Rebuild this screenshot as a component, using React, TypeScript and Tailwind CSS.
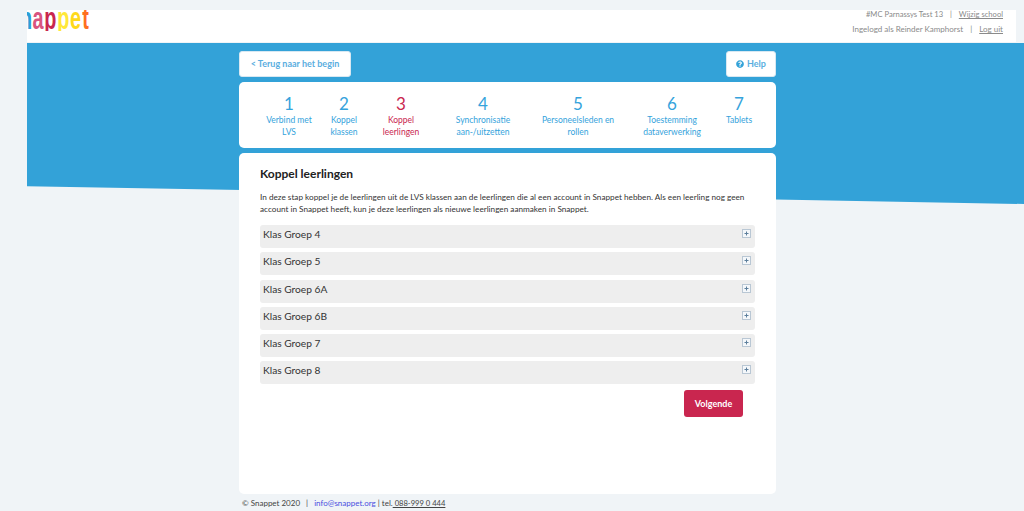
import { FaQuestionCircle } from "react-icons/fa";

const steps = [
  { n: "1", w: "w-[58px]", label: ["Verbind met", "LVS"] },
  { n: "2", w: "w-[52px]", label: ["Koppel", "klassen"] },
  { n: "3", w: "w-[62px]", label: ["Koppel", "leerlingen"], active: true },
  { n: "4", w: "w-[102px]", label: ["Synchronisatie", "aan-/uitzetten"] },
  { n: "5", w: "w-[88px]", label: ["Personeelsleden en", "rollen"] },
  { n: "6", w: "w-[100px]", label: ["Toestemming", "dataverwerking"] },
  { n: "7", w: "w-[34px]", label: ["Tablets"] },
];

const groups = ["Klas Groep 4", "Klas Groep 5", "Klas Groep 6A", "Klas Groep 6B", "Klas Groep 7", "Klas Groep 8"];

const logo = [
  ["n", "w-[12px] text-[#2a9fd8]"],
  ["a", "w-[12px] text-[#d9557f]"],
  ["p", "w-[12.5px] text-[#c9264f]"],
  ["p", "w-[12.5px] text-[#ffe83a]"],
  ["e", "w-[13px] text-[#ffd91a]"],
  ["t", "w-[7px] text-[#ff6f1f]"],
];

function PlusBox() {
  return (
    <svg width="9" height="9" viewBox="0 0 9 9" className="shrink-0">
      <rect x="0.5" y="0.5" width="8" height="8" fill="#f4f7fa" stroke="#b9c7d4" />
      <path d="M4.5 2.5v4M2.5 4.5h4" stroke="#5d7f9c" strokeWidth="1" />
    </svg>
  );
}

export default function App() {
  return (
    <div className="relative h-[511px] w-[1024px] overflow-hidden bg-[#f0f4f7] font-['Lato',sans-serif] text-[#333]">
      <div className="absolute left-[27px] right-0 top-[43px] h-[161px] bg-[#33a2d8] [clip-path:polygon(0_0,100%_0,100%_100%,0_89%)]" />
      <div className="relative">
        <header className="ml-[27px] mr-[8px] mt-[10px] flex h-[32px] justify-between bg-white">
          <div className="h-[21px] w-[64px] overflow-hidden">
            <div className="-ml-[7px] -mt-[11px] flex font-['Liberation_Sans',sans-serif] text-[32px] font-bold leading-[38px]">
              {logo.map(([c, k], i) => (
                <span key={i} className={`${k} flex shrink-0 scale-x-[0.62] justify-center`}>{c}</span>
              ))}
            </div>
          </div>
          <div className="pr-[13px] text-right text-[8px] leading-[15px] text-[#8a8a8a]">
            <div className="-mt-[3px] text-[7.6px]">
              #MC Parnassys Test 13 <span className="mx-[5px]">|</span> <span className="underline">Wijzig school</span>
            </div>
            <div>
              Ingelogd als Reinder Kamphorst <span className="mx-[5px]">|</span> <span className="underline">Log uit</span>
            </div>
          </div>
        </header>

        <main className="ml-[239px] w-[537px]">
          <div className="mt-[9px] flex h-[26px] justify-between text-[9px] font-bold text-[#5aaee0]">
            <button className="h-[26px] w-[112px] rounded-[3px] border border-[#d8e8f2] bg-white">&lt; Terug naar het begin</button>
            <button className="flex h-[26px] w-[50px] items-center justify-center gap-[3px] rounded-[3px] border border-[#d8e8f2] bg-white">
              <FaQuestionCircle className="h-[8px] w-[8px] text-[#33a2d8]" />
              Help
            </button>
          </div>

          <nav className="mt-[5px] flex h-[66px] rounded-[5px] bg-white pl-[21px] pt-[12px] text-center text-[#35a3dc]">
            {steps.map((s) => (
              <div key={s.n} className={`${s.w} shrink-0 ${s.active ? "text-[#c9264f]" : ""}`}>
                <div className="text-[17px] leading-[20px]">{s.n}</div>
                <div className="whitespace-nowrap text-[8.5px] leading-[12px]">
                  {s.label.map((l) => (
                    <div key={l} className="flex justify-center">{l}</div>
                  ))}
                </div>
              </div>
            ))}
          </nav>

          <section className="mt-[5px] h-[341px] rounded-[5px] bg-white px-[21px] pt-[13px]">
            <h1 className="text-[12px] font-bold leading-[15px] text-[#222]">Koppel leerlingen</h1>
            <p className="mt-[10px] text-[8.2px] leading-[12px] text-[#333]">
              In deze stap koppel je de leerlingen uit de LVS klassen aan de leerlingen die al een account in Snappet hebben. Als een leerling nog geen account in Snappet heeft, kun je deze leerlingen als nieuwe leerlingen aanmaken in Snappet.
            </p>
            <div className="mt-[10px] flex w-[495px] flex-col gap-[4.3px]">
              {groups.map((g) => (
                <div key={g} className="flex h-[23px] justify-between rounded-[3px] bg-[#eeeeee] pl-[3px] pr-[4px] pt-[2px] text-[10.2px] leading-[14px] text-[#333]">
                  <span>{g}</span>
                  <span className="pt-[2px]"><PlusBox /></span>
                </div>
              ))}
            </div>
            <div className="mt-[6px] flex w-[483px] justify-end">
              <button className="h-[27px] w-[59px] rounded-[3px] bg-[#c9264f] text-[9px] font-bold text-white">Volgende</button>
            </div>
          </section>

          <footer className="mt-[3px] pl-[3px] text-[8px] leading-[12px] text-[#444]">
            © Snappet 2020 <span className="mx-[4px]">|</span> <span className="text-[#4a4fe0]">info@snappet.org</span> | tel.<span className="text-[7.6px] underline"> 088-999 0 444</span>
          </footer>
        </main>
      </div>
    </div>
  );
}
